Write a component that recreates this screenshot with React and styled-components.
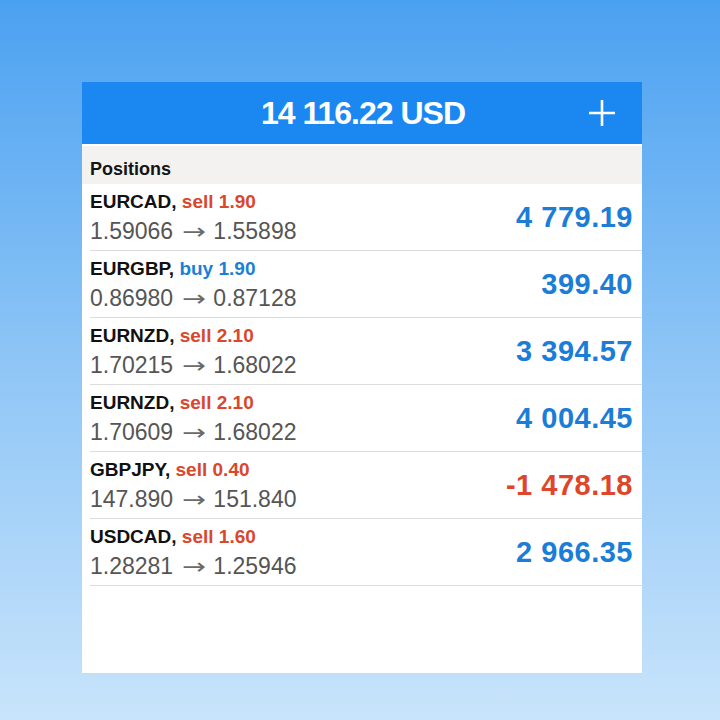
import React from 'react';
import styled, { createGlobalStyle } from 'styled-components';

const GlobalStyle = createGlobalStyle`
    html, body {
        margin: 0;
        padding: 0;
    }
    body {
        font-family: 'Liberation Sans', Arial, sans-serif;
    }
`

const Page = styled.div`
    width: 720px;
    height: 720px;
    box-sizing: border-box;
    padding: 82px 78px 47px 82px;
    background: linear-gradient(180deg, #4ba1f1 0%, #8ec5f6 50%, #c8e4fb 100%);
    display: flex;
`

const Card = styled.div`
    flex: 1;
    display: flex;
    flex-direction: column;
    background: #ffffff;
`

const Header = styled.div`
    height: 62px;
    background: #1b88f1;
    display: flex;
    align-items: center;
    justify-content: center;
    position: relative;
    border-bottom: 2px solid #ffffff;

    .balance {
        color: #ffffff;
        font-weight: bold;
        font-size: 32px;
        letter-spacing: -1px;
        margin-left: 2px;
    }
`

const AddButton = styled.div`
    position: absolute;
    right: 26px;
    top: 17px;
    width: 28px;
    height: 28px;
    display: flex;
`

const SectionTitle = styled.div`
    height: 38px;
    box-sizing: border-box;
    padding: 9px 0 0 8px;
    background: #f3f2f1;
    display: flex;
    align-items: center;
    font-size: 18px;
    font-weight: bold;
    color: #151515;
`

const Row = styled.div`
    height: 66px;
    display: flex;
    align-items: center;
    justify-content: space-between;
    padding: 0 9px 0 8px;
    margin-bottom: 1px;
    position: relative;

    &::after {
        content: '';
        position: absolute;
        left: 8px;
        right: 0;
        bottom: -1px;
        height: 1px;
        background: #dcdcdc;
    }
`

const Info = styled.div`
    display: flex;
    flex-direction: column;
    gap: 5px;
    padding-top: 2px;
`

const Title = styled.div`
    font-size: 19px;
    font-weight: bold;
    color: #111111;
    line-height: 22px;
`

const Side = styled.span`
    color: ${props => (props.type === 'buy' ? '#1c7fd6' : '#d9472c')};
`

const Prices = styled.div`
    font-size: 23px;
    color: #555555;
    line-height: 26px;
    white-space: nowrap;
`

const Arrow = styled.span`
    display: inline-block;
    font-family: 'DejaVu Sans', sans-serif;
    font-size: 22px;
    color: #6a6a6a;
    transform: scaleX(1.3);
    margin: 0 4px 0 5px;
`

const Profit = styled.div`
    font-size: 29px;
    font-weight: bold;
    letter-spacing: 0.5px;
    color: ${props => (props.negative ? '#df452b' : '#1b7dd6')};
`

const positions = [
    { symbol: 'EURCAD', type: 'sell', volume: '1.90', open: '1.59066', close: '1.55898', profit: '4 779.19' },
    { symbol: 'EURGBP', type: 'buy', volume: '1.90', open: '0.86980', close: '0.87128', profit: '399.40' },
    { symbol: 'EURNZD', type: 'sell', volume: '2.10', open: '1.70215', close: '1.68022', profit: '3 394.57' },
    { symbol: 'EURNZD', type: 'sell', volume: '2.10', open: '1.70609', close: '1.68022', profit: '4 004.45' },
    { symbol: 'GBPJPY', type: 'sell', volume: '0.40', open: '147.890', close: '151.840', profit: '-1 478.18' },
    { symbol: 'USDCAD', type: 'sell', volume: '1.60', open: '1.28281', close: '1.25946', profit: '2 966.35' },
];

const App = () => {
    return(
        <Page>
            <GlobalStyle />
            <Card>
                <Header>
                    <span className="balance">14 116.22 USD</span>
                    <AddButton>
                        <svg width="28" height="28" viewBox="0 0 28 28">
                            <path d="M14 1 V27 M1 14 H27" stroke="#ffffff" strokeWidth="2.6" fill="none" />
                        </svg>
                    </AddButton>
                </Header>
                <SectionTitle>Positions</SectionTitle>
                {positions.map((p, i) => (
                    <Row key={i}>
                        <Info>
                            <Title>
                                {p.symbol}, <Side type={p.type}>{p.type} {p.volume}</Side>
                            </Title>
                            <Prices>{p.open} <Arrow>→</Arrow> {p.close}</Prices>
                        </Info>
                        <Profit negative={p.profit.startsWith('-')}>{p.profit}</Profit>
                    </Row>
                ))}
            </Card>
        </Page>
    );
}

export default App;
